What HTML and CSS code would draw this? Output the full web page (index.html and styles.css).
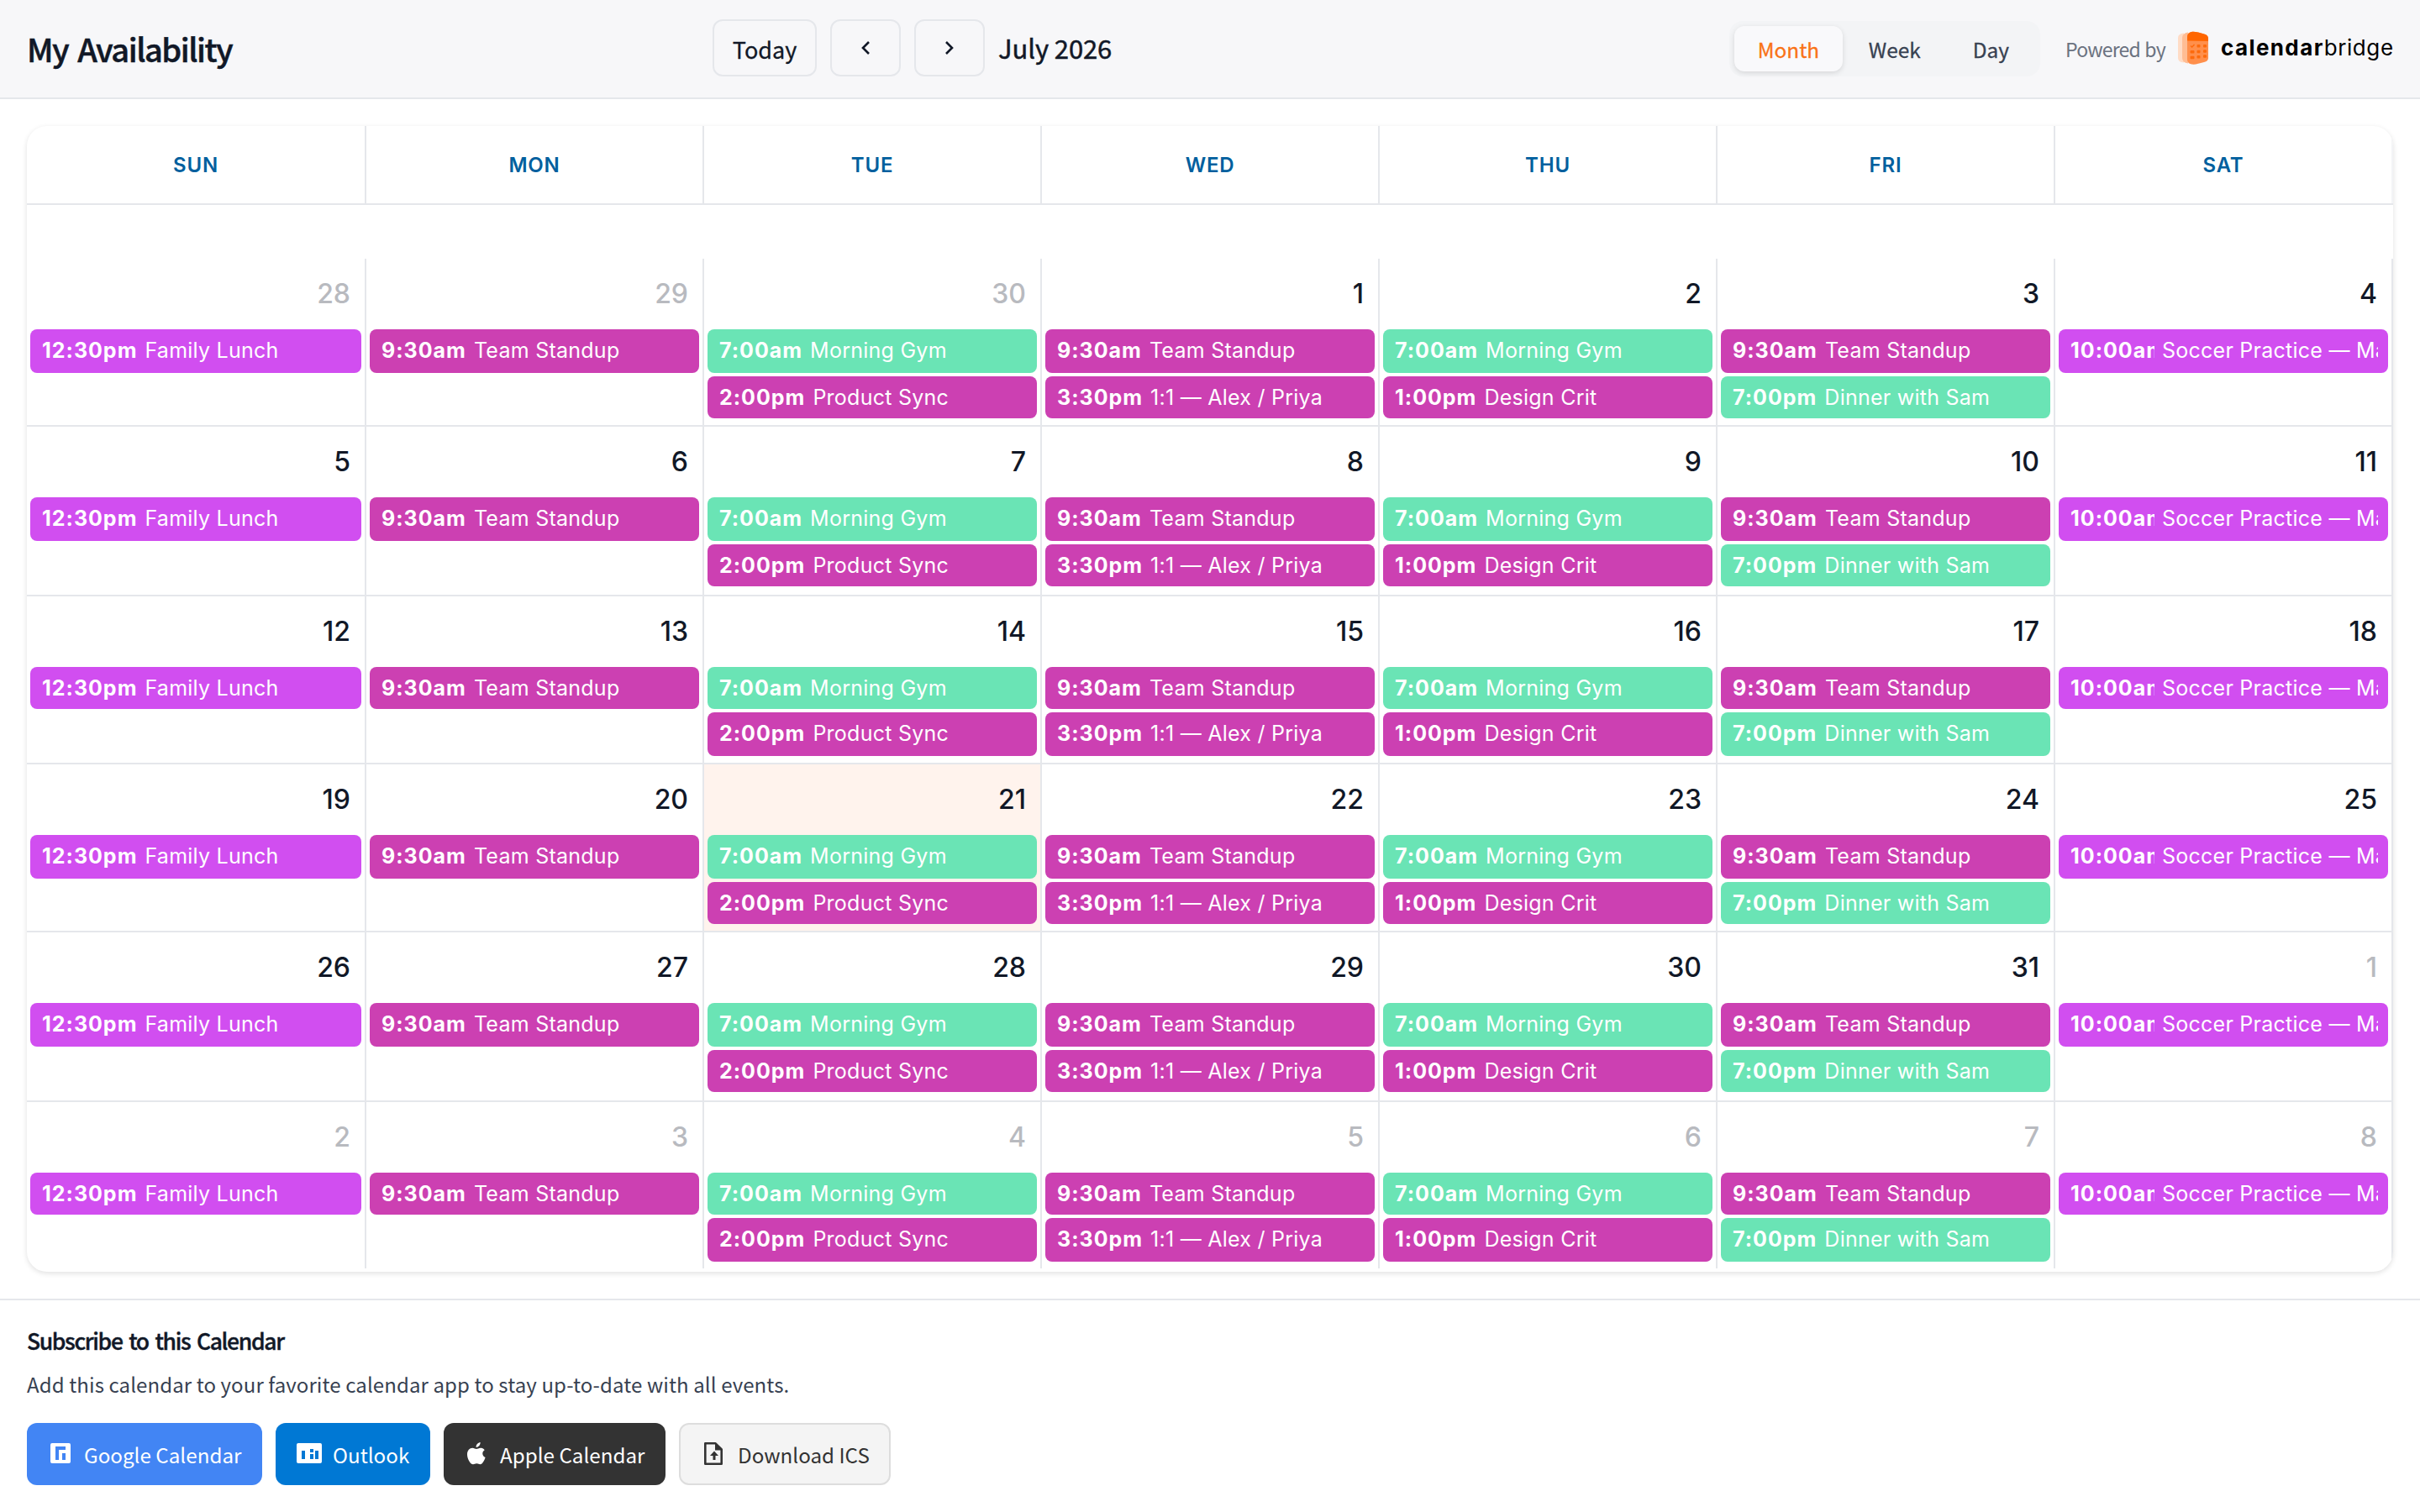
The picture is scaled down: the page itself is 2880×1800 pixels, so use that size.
FILE: index.html
```html
<!DOCTYPE html>
<html lang="en">
<head>
  <meta charset="UTF-8">
  <meta name="viewport" content="width=device-width, initial-scale=1.0">
  <title>My Availability</title>
  <link rel="stylesheet" href="styles.css">
</head>
<body>
  <header class="header">
    <h1 class="title">My Availability</h1>
    <div class="nav">
      <button class="nav-btn today-btn">Today</button>
      <button class="nav-btn arrow-btn" aria-label="Previous">
        <svg width="12" height="18" viewBox="0 0 12 18"><path d="M10 2 L3 9 L10 16"/></svg>
      </button>
      <button class="nav-btn arrow-btn" aria-label="Next">
        <svg width="12" height="18" viewBox="0 0 12 18"><path d="M2 2 L9 9 L2 16"/></svg>
      </button>
      <span class="month-label">July 2026</span>
    </div>
    <div class="views">
      <button class="view-btn active">Month</button>
      <button class="view-btn">Week</button>
      <button class="view-btn">Day</button>
    </div>
    <span class="powered">Powered by</span>
    <svg class="logo" width="38" height="42" viewBox="0 0 38 42">
      <path d="M8 2.5 Q1 3 1 8 V32 Q1 37 8 37.500 Z" fill="#ffdcc6"/>
      <path d="M13 1.500 Q6 2.500 6 8 V32 Q6 37.500 13 38.500 Z" fill="#ffbd94"/>
      <path d="M18 .8 Q20 .4 25 1.500 L32 3.500 Q37 4.500 37 9 V32 Q37 36 32 37 L22 39.500 Q12 40.500 12 34 V7 Q12 1.500 18 .8 Z" fill="#ff8f4b"/>
      <path d="M12 11.500 V7 Q12 1.500 18 .8 Q20 .4 25 1.500 L32 3.500 Q37 4.500 37 9 V12 Z" fill="#ff6600"/>
      <g fill="#fd6a0c">
        <rect x="23.500" y="16" width="4" height="3.500" rx="1"/>
        <rect x="31" y="16" width="4" height="3.500" rx="1"/>
        <rect x="15.500" y="23" width="5" height="3.500" rx="1"/>
        <rect x="23.500" y="22.700" width="4" height="3.500" rx="1"/>
        <rect x="31" y="22.300" width="4" height="3.500" rx="1"/>
        <rect x="15.500" y="29.700" width="5" height="3.500" rx="1"/>
        <rect x="23.500" y="29" width="4" height="3.500" rx="1"/>
        <rect x="31" y="28.300" width="4" height="3.500" rx="1"/>
      </g>
      <path d="M16 17.500 L17.700 19 L20.500 16" fill="none" stroke="#fd6a0c" stroke-width="1.400"/>
    </svg>
    <span class="wordmark"><b>calendar</b>bridge</span>
  </header>

  <main class="calendar">
    <div class="weekdays" id="weekdays"></div>
    <div class="weeks" id="weeks"></div>
  </main>

  <footer class="subscribe">
    <h2 class="subscribe-title">Subscribe to this Calendar</h2>
    <p class="subscribe-text">Add this calendar to your favorite calendar app to stay up-to-date with all events.</p>
    <div class="subscribe-buttons">
      <a class="sub-btn google">
        <svg width="24" height="24" viewBox="0 0 24 24">
          <path fill="currentColor" fill-rule="evenodd" d="M2 0H22Q24 0 24 2V22Q24 24 22 24H2Q0 24 0 22V2Q0 0 2 0Z M6 4V20H10V8H18V4Z M14 12V20H18V12Z"/>
        </svg>
        <span>Google Calendar</span>
      </a>
      <a class="sub-btn outlook">
        <svg width="30" height="24" viewBox="0 0 30 24">
          <path fill="currentColor" fill-rule="evenodd" d="M2 0H28Q30 0 30 2V22Q30 24 28 24H2Q0 24 0 22V2Q0 0 2 0Z M6 9V19H10V9Z M16 7V11H20V7Z M16 13V19H20V13Z M22 9V19H26V9Z"/>
        </svg>
        <span>Outlook</span>
      </a>
      <a class="sub-btn apple">
        <svg width="22" height="27" viewBox="0 0 22 27">
          <path fill="currentColor" d="M15.600 0C15.800 3.300 13.500 5.800 10.600 5.900C10.400 3 12.900 .4 15.600 0Z M20.700 9.200C17.200 11.300 17.600 16.400 21.600 18C20.600 21.200 18.200 26.300 15.500 26.300C13.900 26.300 13.300 25.300 11.300 25.300C9.300 25.300 8.600 26.300 7.100 26.300C3.800 26.400 0 20 0 14.600C0 9.400 3 6.800 6.200 6.700C8.200 6.700 9.700 8 11 8C12.200 8 14.200 6.500 16.600 6.700C18.200 6.800 19.800 7.600 20.700 9.200Z"/>
        </svg>
        <span>Apple Calendar</span>
      </a>
      <a class="sub-btn ics">
        <svg width="22" height="27" viewBox="0 0 22 27">
          <path fill="none" stroke="currentColor" stroke-width="2.600" stroke-linejoin="round" d="M1.300 1.300H13.500L20.700 8.500V25.700H1.300Z"/>
          <path fill="currentColor" d="M13 1L21.500 9.500H13Z M12 10.500L17 16H13.500V21H10.500V16H7Z"/>
        </svg>
        <span>Download ICS</span>
      </a>
    </div>
  </footer>

  <script>
    const dayNames = ['Sun', 'Mon', 'Tue', 'Wed', 'Thu', 'Fri', 'Sat'];

    // events repeat every week, indexed by weekday
    const weekly = [
      [['12:30pm', 'Family Lunch', 'family']],
      [['9:30am', 'Team Standup', 'work']],
      [['7:00am', 'Morning Gym', 'personal'], ['2:00pm', 'Product Sync', 'work']],
      [['9:30am', 'Team Standup', 'work'], ['3:30pm', '1:1 — Alex / Priya', 'work']],
      [['7:00am', 'Morning Gym', 'personal'], ['1:00pm', 'Design Crit', 'work']],
      [['9:30am', 'Team Standup', 'work'], ['7:00pm', 'Dinner with Sam', 'personal']],
      [['10:00am', 'Soccer Practice — Maya', 'family long']]
    ];

    const weekdays = document.getElementById('weekdays');
    const weeks = document.getElementById('weeks');

    dayNames.forEach(name => {
      const cell = document.createElement('div');
      cell.className = 'weekday';
      cell.textContent = name;
      weekdays.appendChild(cell);
    });

    for (let i = 0; i < 42; i++) {
      const date = new Date(2026, 5, 28 + i);
      const cell = document.createElement('div');
      cell.className = 'day';
      if (date.getMonth() !== 6) cell.classList.add('other');
      if (date.getMonth() === 6 && date.getDate() === 21) cell.classList.add('today');

      let html = `<div class="day-number">${date.getDate()}</div>`;
      weekly[i % 7].forEach(([time, name, type]) => {
        html += `<div class="event ${type}"><span class="event-time">${time}</span><span class="event-name">${name}</span></div>`;
      });
      cell.innerHTML = html;
      weeks.appendChild(cell);
    }
  </script>
</body>
</html>
```
FILE: styles.css
```css
* {
  box-sizing: border-box;
}
body {
  margin: 0;
  height: 1800px;
  overflow: hidden;
  background: #fff;
  color: #111827;
  font-family: "Noto Sans CJK SC", "Noto Sans", sans-serif;
}
button {
  font-family: inherit;
  color: inherit;
  padding: 0;
  border: none;
  background: none;
}
.header {
  display: flex;
  align-items: center;
  height: 118px;
  padding: 0 30px 2px 32px;
  background: #f7f7f9;
  border-bottom: 2px solid #e5e7eb;
}
.title {
  flex: none;
  width: 816px;
  margin: 0;
  padding-top: 2px;
  font-size: 38px;
  line-height: 60px;
  font-weight: 500;
  letter-spacing: -1.5px;
  word-spacing: 4px;
  -webkit-text-stroke: 0.5px #111827;
}
.nav {
  display: flex;
  flex: none;
  align-items: center;
  gap: 16px;
  width: 1210px;
}
.nav-btn {
  display: flex;
  align-items: center;
  justify-content: center;
  height: 68px;
  border: 2px solid #e5e7eb;
  border-radius: 12px;
}
.today-btn {
  width: 124px;
  padding-top: 3px;
  font-size: 27px;
  line-height: 40px;
  -webkit-text-stroke: 0.3px #111827;
}
.arrow-btn {
  width: 84px;
}
.arrow-btn svg {
  fill: none;
  stroke: #111827;
  stroke-width: 2.6;
}
.month-label {
  font-size: 31px;
  line-height: 46px;
  letter-spacing: -0.1px;
  -webkit-text-stroke: 0.5px #111827;
}
.views {
  display: flex;
  flex: none;
  width: 370px;
  height: 66px;
  margin-top: 2px;
  padding: 6px;
  border-radius: 16px;
  background: #f3f4f6;
}
.view-btn {
  padding: 0 31px;
  border-radius: 12px;
  font-size: 24.4px;
  color: #374151;
  -webkit-text-stroke: 0.3px currentColor;
}
.view-btn.active {
  width: 132px;
  padding: 0;
  background: #f9f9fb;
  color: #f97316;
  box-shadow: 0 2px 6px rgba(0, 0, 0, 0.12);
}
.powered {
  flex: none;
  width: 133px;
  margin: 2px 0 0 30px;
  font-size: 23px;
  letter-spacing: -0.8px;
  word-spacing: 1px;
  color: #6b7280;
  white-space: nowrap;
}
.logo {
  flex: none;
  margin-top: 2px;
}
.wordmark {
  margin: -2px 0 0 14px;
  font-family: Inter, sans-serif;
  font-size: 26px;
  letter-spacing: 0.6px;
  color: #000;
}
.wordmark b {
  font-weight: 700;
  letter-spacing: 1.4px;
}
.calendar {
  height: 1364px;
  margin: 32px 32px 0;
  border-radius: 24px;
  background: #fff;
  box-shadow: 0 2px 6px rgba(0, 0, 0, 0.12);
  overflow: hidden;
  font-family: Inter, sans-serif;
  font-optical-sizing: none;
}
.weekdays,
.weeks {
  display: grid;
  grid-template-columns: 404px repeat(6, 402px);
}
.weekdays {
  height: 94px;
  border-bottom: 2px solid #e5e7eb;
}
.weekday {
  display: flex;
  align-items: center;
  justify-content: center;
  border-right: 2px solid #e5e7eb;
  font-size: 24px;
  font-weight: 600;
  letter-spacing: 0.8px;
  text-transform: uppercase;
  color: #005f9e;
}
.weekday:last-child {
  border-right-color: #f3f4f6;
}
.weeks {
  grid-template-rows: 200px 202px 200px 200px 202px 198px;
  margin-top: 64px;
  border-bottom: 2px solid #fff;
}
.day {
  min-width: 0;
  padding: 0 4px;
  border-right: 2px solid #e5e7eb;
  border-bottom: 2px solid #e5e7eb;
}
.day:nth-last-child(-n+7) {
  border-bottom: none;
}
.day.today {
  background: #fff3ed;
}
.day-number {
  height: 84px;
  padding: 22px 13px 0 0;
  font-size: 32px;
  font-weight: 450;
  line-height: 40px;
  text-align: right;
}
.day.other .day-number {
  color: #b8babf;
}
.event {
  display: flex;
  gap: 9px;
  height: 52px;
  margin-bottom: 4px;
  padding: 0 12px 0 14px;
  border-radius: 8px;
  color: #fff;
  font-size: 25px;
  line-height: 51px;
  white-space: nowrap;
}
.event + .event {
  height: 50px;
}
.day:nth-child(n+15):nth-child(-n+21) .event,
.day:nth-child(n+36) .event {
  height: 50px;
}
.day:nth-child(n+15):nth-child(-n+21) .event + .event,
.day:nth-child(n+36) .event + .event {
  height: 52px;
}
.event-time {
  flex: none;
  font-weight: 700;
  letter-spacing: 1px;
  overflow: hidden;
}
.event-name {
  min-width: 0;
  letter-spacing: 0.25px;
  overflow: hidden;
}
.event.long .event-time {
  width: 100px;
}
.family {
  background: #d14ef0;
}
.work {
  background: #cc40b2;
}
.personal {
  background: #6ae4b5;
}
.subscribe {
  margin-top: 32px;
  padding: 30px 32px 0;
  border-top: 2px solid #e5e7eb;
}
.subscribe-title {
  margin: 0;
  font-size: 26.5px;
  line-height: 36px;
  font-weight: 500;
  letter-spacing: -1.35px;
  word-spacing: 3px;
  -webkit-text-stroke: 0.4px #111827;
}
.subscribe-text {
  margin: 16px 0 0;
  font-size: 24px;
  line-height: 36px;
  letter-spacing: 0.1px;
  color: #374151;
}
.subscribe-buttons {
  display: flex;
  gap: 16px;
  margin-top: 28px;
}
.sub-btn {
  display: flex;
  flex: none;
  height: 74px;
  padding-left: 28px;
  border-radius: 12px;
  color: #fff;
  font-size: 24.2px;
  line-height: 76px;
  white-space: nowrap;
}
.sub-btn svg {
  flex: none;
  margin-top: 24px;
}
.google {
  width: 280px;
  gap: 16px;
  background: #4285f4;
}
.outlook {
  width: 184px;
  gap: 13px;
  padding-left: 25px;
  background: #0078d4;
}
.apple {
  width: 264px;
  gap: 17px;
  background: #333;
}
.ics {
  width: 252px;
  gap: 18px;
  border: 2px solid #ddd;
  background: #f4f4f4;
  color: #333;
  line-height: 72px;
}
.apple svg {
  margin-top: 23px;
}
.ics svg {
  margin-top: 21px;
}
```
